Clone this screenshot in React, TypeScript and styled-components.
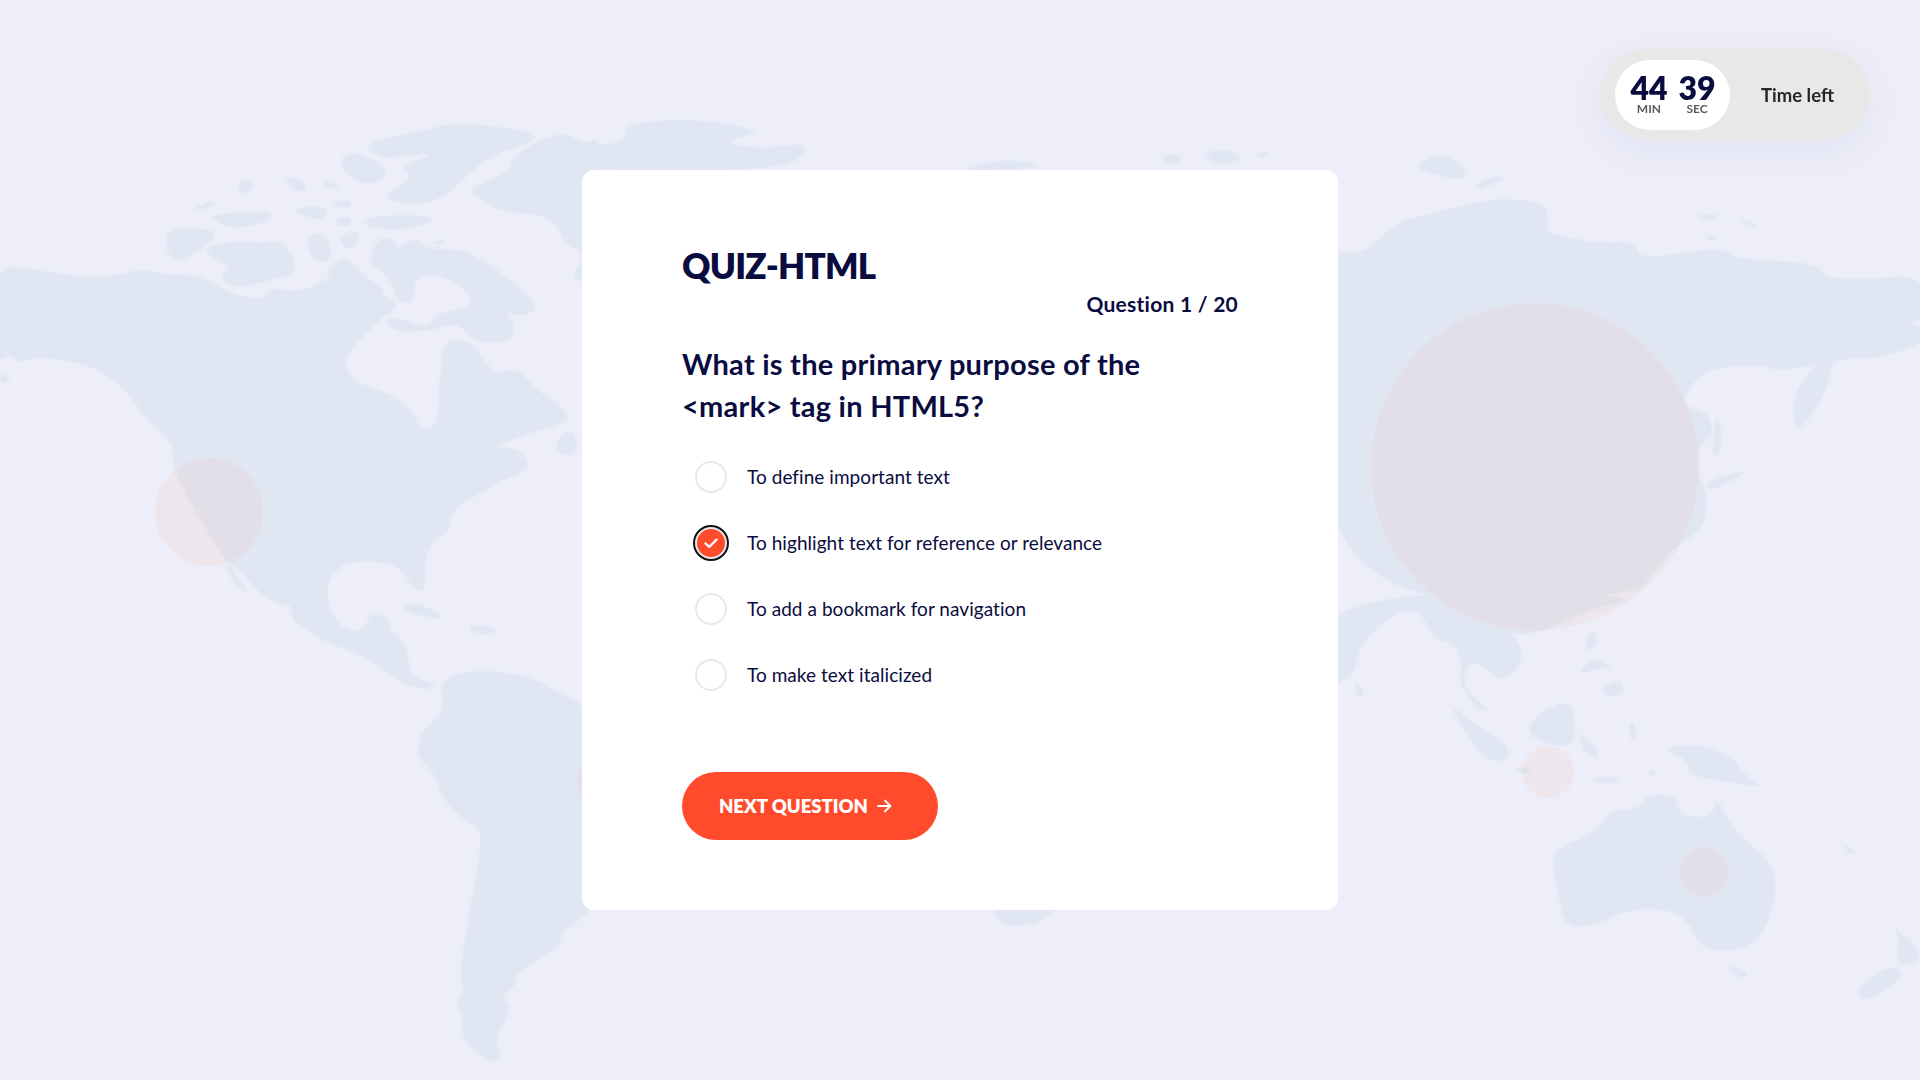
import styled, { createGlobalStyle } from "styled-components"

type Pt = [number, number]

type Region = {
  transform: string
  shapes: Pt[][]
}

// outlines traced from the reference, each group in the units of its own crop
const regions: Region[] = [
  {
    transform: "translate(0,100) scale(0.3827,0.3333)",
    shapes: [
      [[-20,495],[100,510],[250,540],[380,505],[420,525],[520,525],[600,580],[690,605],[700,560],[790,580],[860,530],[880,560],[885,600],[900,475],[930,500],[950,530],[1000,560],[1000,590],[1040,605],[1020,640],[1000,650],[920,740],[895,790],[930,850],[1030,885],[1085,940],[1090,985],[1145,985],[1150,830],[1160,715],[1240,730],[1285,825],[1355,805],[1400,870],[1480,930],[1480,970],[1380,1000],[1270,1050],[1350,1040],[1390,1105],[1330,1130],[1250,1180],[1170,1240],[1180,1290],[1110,1340],[1110,1475],[1080,1470],[1045,1390],[900,1380],[850,1450],[860,1520],[710,1520],[620,1400],[590,1390],[450,1110],[455,1040],[430,1010],[370,940],[340,880],[240,790],[90,770],[50,790],[30,760],[-20,790]],
      [[1010,640],[1120,690],[1140,640],[1230,625],[1230,580],[1150,520],[1080,530],[1085,610],[1040,610],[1020,530],[960,490],[990,410],[1030,420],[1040,450],[1090,410],[1110,450],[1200,445],[1290,500],[1400,610],[1395,635],[1350,650],[1320,625],[1350,700],[1310,730],[1240,725],[1200,670],[1150,680],[1130,690],[1020,695]],
      [[850,510],[900,470],[930,500],[950,530],[890,590],[870,560]],
      [[435,385],[530,385],[575,405],[480,485],[435,465]],
      [[540,440],[600,425],[690,430],[740,420],[785,520],[700,540],[620,565],[570,530],[610,505],[545,465]],
      [[550,345],[660,335],[710,335],[700,365],[620,385],[570,370]],
      [[805,400],[850,400],[870,470],[840,490],[805,460]],
      [[885,410],[930,390],[940,420],[905,455]],
      [[765,325],[850,315],[855,360],[790,350]],
      [[945,350],[1125,345],[1125,370],[1040,390],[960,380]],
      [[875,355],[915,350],[915,378],[880,375]],
      [[870,305],[915,300],[915,325],[880,320]],
      [[880,185],[930,150],[1015,210],[990,250],[930,250]],
      [[985,300],[1085,235],[1045,200],[1140,160],[1060,165],[1000,175],[940,130],[1100,95],[1190,65],[1400,95],[1395,125],[1260,175],[1140,320]],
      [[1400,125],[1480,95],[1520,135],[1580,110],[1580,540],[1490,540],[1520,490],[1515,445],[1480,440],[1445,345],[1300,335],[1255,290],[1220,270],[1340,210],[1330,180]],
      [[740,230],[775,235],[805,265],[780,280]],
      [[840,240],[885,255],[880,270],[850,260]],
      [[630,240],[665,245],[640,290],[620,270]],
      [[505,325],[560,300],[560,315],[520,330]],
      [[1440,1060],[1490,970],[1515,1065]],
      [[1130,430],[1165,415],[1150,435]],
      [[0,825],[22,825],[20,850],[0,845]],
      [[585,1395],[600,1395],[650,1480],[625,1470]],
    ],
  },
  {
    transform: "translate(300,560) scale(0.3333,0.3333)",
    shapes: [
      [[-30,-20],[100,-20],[78,50],[80,120],[110,190],[150,215],[200,205],[210,160],[270,170],[265,210],[320,250],[325,330],[350,355],[420,385],[330,380],[280,350],[200,290],[100,255],[0,200],[-30,170]],
      [[290,-20],[372,-20],[375,95],[350,90],[320,40]],
      [[420,385],[450,345],[540,330],[700,350],[790,410],[860,430],[860,1030],[870,1060],[790,1105],[770,1170],[650,1230],[640,1290],[600,1300],[635,1350],[580,1440],[610,1495],[570,1510],[480,1430],[490,1360],[465,1330],[495,1290],[475,1240],[550,840],[530,800],[440,740],[400,630],[350,590],[360,520],[420,470],[430,420]],
      [[305,135],[350,130],[440,170],[400,175],[320,155]],
      [[505,195],[600,205],[560,225],[515,220]],
    ],
  },
  {
    transform: "translate(1320,100) scale(0.3827,0.3333)",
    shapes: [
      [[0,480],[50,455],[125,460],[190,370],[300,340],[400,310],[480,295],[590,310],[595,370],[590,400],[680,420],[730,430],[825,425],[830,480],[1000,450],[1060,450],[1100,480],[1300,490],[1320,535],[1420,540],[1580,525],[1580,660],[1540,665],[1580,690],[1580,725],[1480,770],[1370,775],[1210,815],[1140,790],[1000,810],[950,890],[950,920],[1010,935],[1030,1000],[985,1040],[990,1140],[1010,1175],[1005,1280],[940,1330],[880,1400],[820,1500],[0,1500]],
      [[1235,900],[1270,830],[1345,735],[1340,790],[1320,880],[1270,970],[1240,985]],
      [[1020,1135],[1125,1110],[1060,1150],[1010,1175]],
      [[1035,925],[1055,1035],[1025,1085]],
      [[285,175],[330,160],[380,210],[375,240],[300,225],[250,200]],
      [[395,270],[440,230],[490,230],[450,255]],
      [[970,345],[1050,345],[1020,365]],
      [[1090,360],[1140,370],[1130,380]],
      [[1000,405],[1045,415],[1020,425]],
    ],
  },
  {
    transform: "translate(1320,600) scale(0.3827,0.3333)",
    shapes: [
      [[0,-20],[860,-20],[700,30],[545,110],[490,90],[525,140],[525,200],[470,245],[420,190],[385,190],[370,260],[445,335],[410,330],[360,240],[375,200],[350,125],[300,120],[260,25],[190,40],[100,140],[90,220],[47,250],[0,280]],
      [[90,240],[120,285],[95,295]],
      [[335,310],[400,370],[490,430],[490,485],[440,480],[400,430]],
      [[660,290],[670,440],[600,435],[540,400],[560,350]],
      [[675,385],[740,475],[690,465]],
      [[710,90],[725,110],[710,155],[690,130]],
      [[710,170],[765,205],[740,200],[670,225]],
      [[735,260],[790,240],[790,285],[745,290]],
      [[505,500],[560,510],[530,522]],
      [[690,535],[800,530],[750,555]],
      [[810,355],[830,395],[810,425]],
      [[890,445],[980,430],[1085,475],[1100,520],[1160,560],[1090,550],[1040,540],[965,525],[965,480]],
      [[600,750],[720,700],[760,630],[835,630],[860,580],[930,590],[935,640],[990,655],[1030,640],[1035,590],[1085,700],[1165,770],[1200,860],[1150,1030],[1060,1055],[990,1040],[960,950],[870,920],[790,935],[730,970],[640,985],[625,880]],
      [[1065,1090],[1115,1115],[1110,1135],[1075,1120]],
      [[1495,980],[1580,1060],[1530,1100],[1505,1080],[1515,1010]],
      [[1490,1095],[1530,1125],[1430,1205],[1405,1185],[1420,1150]],
      [[1360,725],[1400,760],[1385,760]],
      [[860,510],[878,520],[862,528]],
    ],
  },
  {
    transform: "translate(560,100) scale(0.51,0.3333)",
    shapes: [
      [[-10,100],[35,130],[45,140],[130,125],[125,75],[210,60],[310,65],[400,95],[315,125],[390,150],[500,125],[440,215],[-10,215]],
      [[860,180],[920,185],[940,205],[770,215]],
      [[1170,165],[1225,165],[1205,200]],
      [[1260,165],[1305,145],[1340,175],[1290,195]],
      [[1365,160],[1395,155],[1375,175]],
    ],
  },
  {
    transform: "translate(560,900) scale(0.51,0.3333)",
    shapes: [
      [[850,-10],[990,-10],[950,65],[890,80],[855,60]],
      [[-10,-10],[55,-10],[45,50],[10,85],[-10,70]],
    ],
  },
]

const spots = [
  { cx: 1535, cy: 467, r: 164 },
  { cx: 209, cy: 512, r: 54 },
  { cx: 1548, cy: 772, r: 26 },
  { cx: 1704, cy: 872, r: 25 },
  { cx: 602, cy: 782, r: 25 },
]

const options = [
  "To define important text",
  "To highlight text for reference or relevance",
  "To add a bookmark for navigation",
  "To make text italicized",
]

// closed curve through the midpoints, so the traced coasts come out rounded
const toPath = (pts: Pt[]) => {
  const mid = (a: Pt, b: Pt) => `${(a[0] + b[0]) / 2} ${(a[1] + b[1]) / 2}`
  let d = `M${mid(pts[pts.length - 1], pts[0])}`
  pts.forEach((p, i) => {
    d += ` Q${p[0]} ${p[1]} ${mid(p, pts[(i + 1) % pts.length])}`
  })
  return d + "Z"
}

const WorldMap = () => (
  <MapSvg viewBox="0 0 1920 1080" aria-hidden="true">
    <defs>
      <filter id="soft" x="-5%" y="-5%" width="110%" height="110%">
        <feGaussianBlur stdDeviation="0.7" />
      </filter>
    </defs>
    <g filter="url(#soft)">
      {/* halo first, land on top, so a halo never cuts through a neighbour */}
      {regions.map((region) => (
        <g key={region.transform} transform={region.transform}>
          {region.shapes.map((shape, i) => (
            <path
              key={i}
              d={toPath(shape)}
              fill="#e8edf8"
              stroke="#e8edf8"
              strokeWidth="14"
              strokeLinejoin="round"
            />
          ))}
        </g>
      ))}
      {regions.map((region) => (
        <g key={region.transform} transform={region.transform}>
          {region.shapes.map((shape, i) => (
            <path key={i} d={toPath(shape)} fill="#e0e7f2" />
          ))}
        </g>
      ))}
      {spots.map((spot) => (
        <circle key={spot.cx} {...spot} fill="#ff8a70" fillOpacity="0.08" />
      ))}
    </g>
  </MapSvg>
)

const CheckMark = () => (
  <svg width="16" height="16" viewBox="0 0 16 16" fill="none">
    <path
      d="M2.5 8.4 6.2 12 13.5 4.6"
      stroke="#fff"
      strokeWidth="2.3"
      strokeLinecap="round"
      strokeLinejoin="round"
    />
  </svg>
)

const ArrowRight = () => (
  <svg width="15" height="14" viewBox="0 0 15 14" fill="none">
    <path
      d="M1 7h12.4M8 1.6 13.4 7 8 12.4"
      stroke="#fff"
      strokeWidth="2"
      strokeLinecap="round"
      strokeLinejoin="round"
    />
  </svg>
)

export default function App() {
  const selected = 1

  return (
    <Page>
      <GlobalStyle />
      <WorldMap />

      <Timer>
        <Clock>
          <ClockUnit>
            <ClockValue>44</ClockValue>
            <ClockLabel>MIN</ClockLabel>
          </ClockUnit>
          <ClockUnit>
            <ClockValue>39</ClockValue>
            <ClockLabel>SEC</ClockLabel>
          </ClockUnit>
        </Clock>
        <TimerText>Time left</TimerText>
      </Timer>

      <Card>
        <Title>QUIZ-HTML</Title>
        <Counter>Question 1 / 20</Counter>
        <QuestionText>
          What is the primary purpose of the
          <br />
          {"<mark> tag in HTML5?"}
        </QuestionText>

        <OptionList>
          {options.map((option, i) => (
            <Option key={option}>
              <Radio $checked={i === selected}>
                {i === selected && <CheckMark />}
              </Radio>
              <OptionLabel>{option}</OptionLabel>
            </Option>
          ))}
        </OptionList>

        <NextButton>
          NEXT QUESTION
          <ArrowRight />
        </NextButton>
      </Card>
    </Page>
  )
}

const GlobalStyle = createGlobalStyle`
  html, body {
    margin: 0;
    padding: 0;
  }
  body {
    font-family: "Lato", "Open Sans", sans-serif;
    background: #edeef9;
  }
`

const Page = styled.div`
  position: relative;
  width: 1920px;
  height: 1080px;
  overflow: hidden;
  display: flex;
  justify-content: center;
  align-items: flex-start;
  padding-top: 170px;
  box-sizing: border-box;
  background: #edeef9;
`

const MapSvg = styled.svg`
  position: absolute;
  inset: 0;
  width: 1920px;
  height: 1080px;
`

const Timer = styled.div`
  position: absolute;
  top: 49px;
  right: 50px;
  width: 270px;
  height: 91px;
  box-sizing: border-box;
  padding-left: 15px;
  display: flex;
  align-items: center;
  background: #e8e8e8;
  border-radius: 46px;
  box-shadow: 0 12px 40px rgba(60, 60, 130, 0.06);
`

const Clock = styled.div`
  width: 115px;
  height: 70px;
  border-radius: 35px;
  background: #fff;
  display: flex;
  justify-content: center;
  gap: 11px;
  padding: 14px 0 0 1px;
  box-sizing: border-box;
`

const ClockUnit = styled.div`
  display: flex;
  flex-direction: column;
  align-items: center;
`

const ClockValue = styled.div`
  font-size: 32px;
  line-height: 28px;
  font-weight: 800;
  color: #0a0c40;
`

const ClockLabel = styled.div`
  font-size: 12px;
  line-height: 13px;
  font-weight: 700;
  color: #5a5a5e;
`

const TimerText = styled.div`
  margin-left: 31px;
  font-size: 18.5px;
  font-weight: 700;
  color: #26262b;
  white-space: nowrap;
`

const Card = styled.main`
  position: relative;
  width: 756px;
  box-sizing: border-box;
  padding: 73px 100px 70px;
  background: #fff;
  border-radius: 12px;
`

const Title = styled.h1`
  margin: 0;
  font-size: 35px;
  line-height: 44px;
  font-weight: 800;
  letter-spacing: -0.8px;
  color: #0a0c40;
`

const Counter = styled.div`
  margin-top: 3px;
  text-align: right;
  font-size: 21px;
  line-height: 28px;
  font-weight: 700;
  letter-spacing: 0.25px;
  color: #0a0c40;
`

const QuestionText = styled.h2`
  margin: 25px 0 0;
  font-size: 29px;
  line-height: 42px;
  font-weight: 700;
  letter-spacing: 0.25px;
  color: #0a0c40;
`

const OptionList = styled.div`
  margin-top: 17px;
  display: flex;
  flex-direction: column;
`

const Option = styled.label`
  height: 66px;
  display: flex;
  align-items: center;
  padding-left: 13px;
`

const Radio = styled.span<{ $checked: boolean }>`
  width: 32px;
  height: 32px;
  flex: none;
  box-sizing: border-box;
  display: flex;
  align-items: center;
  justify-content: center;
  border-radius: 50%;
  border: 2px solid #e8e8e8;
  background: ${(p) => (p.$checked ? "#ff4a2b" : "#fff")};
  outline: ${(p) => (p.$checked ? "2.5px solid #111" : "none")};
`

const OptionLabel = styled.span`
  margin-left: 20px;
  padding-bottom: 2px;
  font-size: 19px;
  letter-spacing: 0.05px;
  color: #0a0c40;
`

const NextButton = styled.button`
  margin-top: 64px;
  width: 256px;
  height: 68px;
  padding: 0 0 1px 37px;
  display: flex;
  align-items: center;
  gap: 9px;
  border: none;
  border-radius: 34px;
  background: #ff4a2b;
  color: #fff;
  font-family: inherit;
  font-size: 18.5px;
  font-weight: 800;
`
